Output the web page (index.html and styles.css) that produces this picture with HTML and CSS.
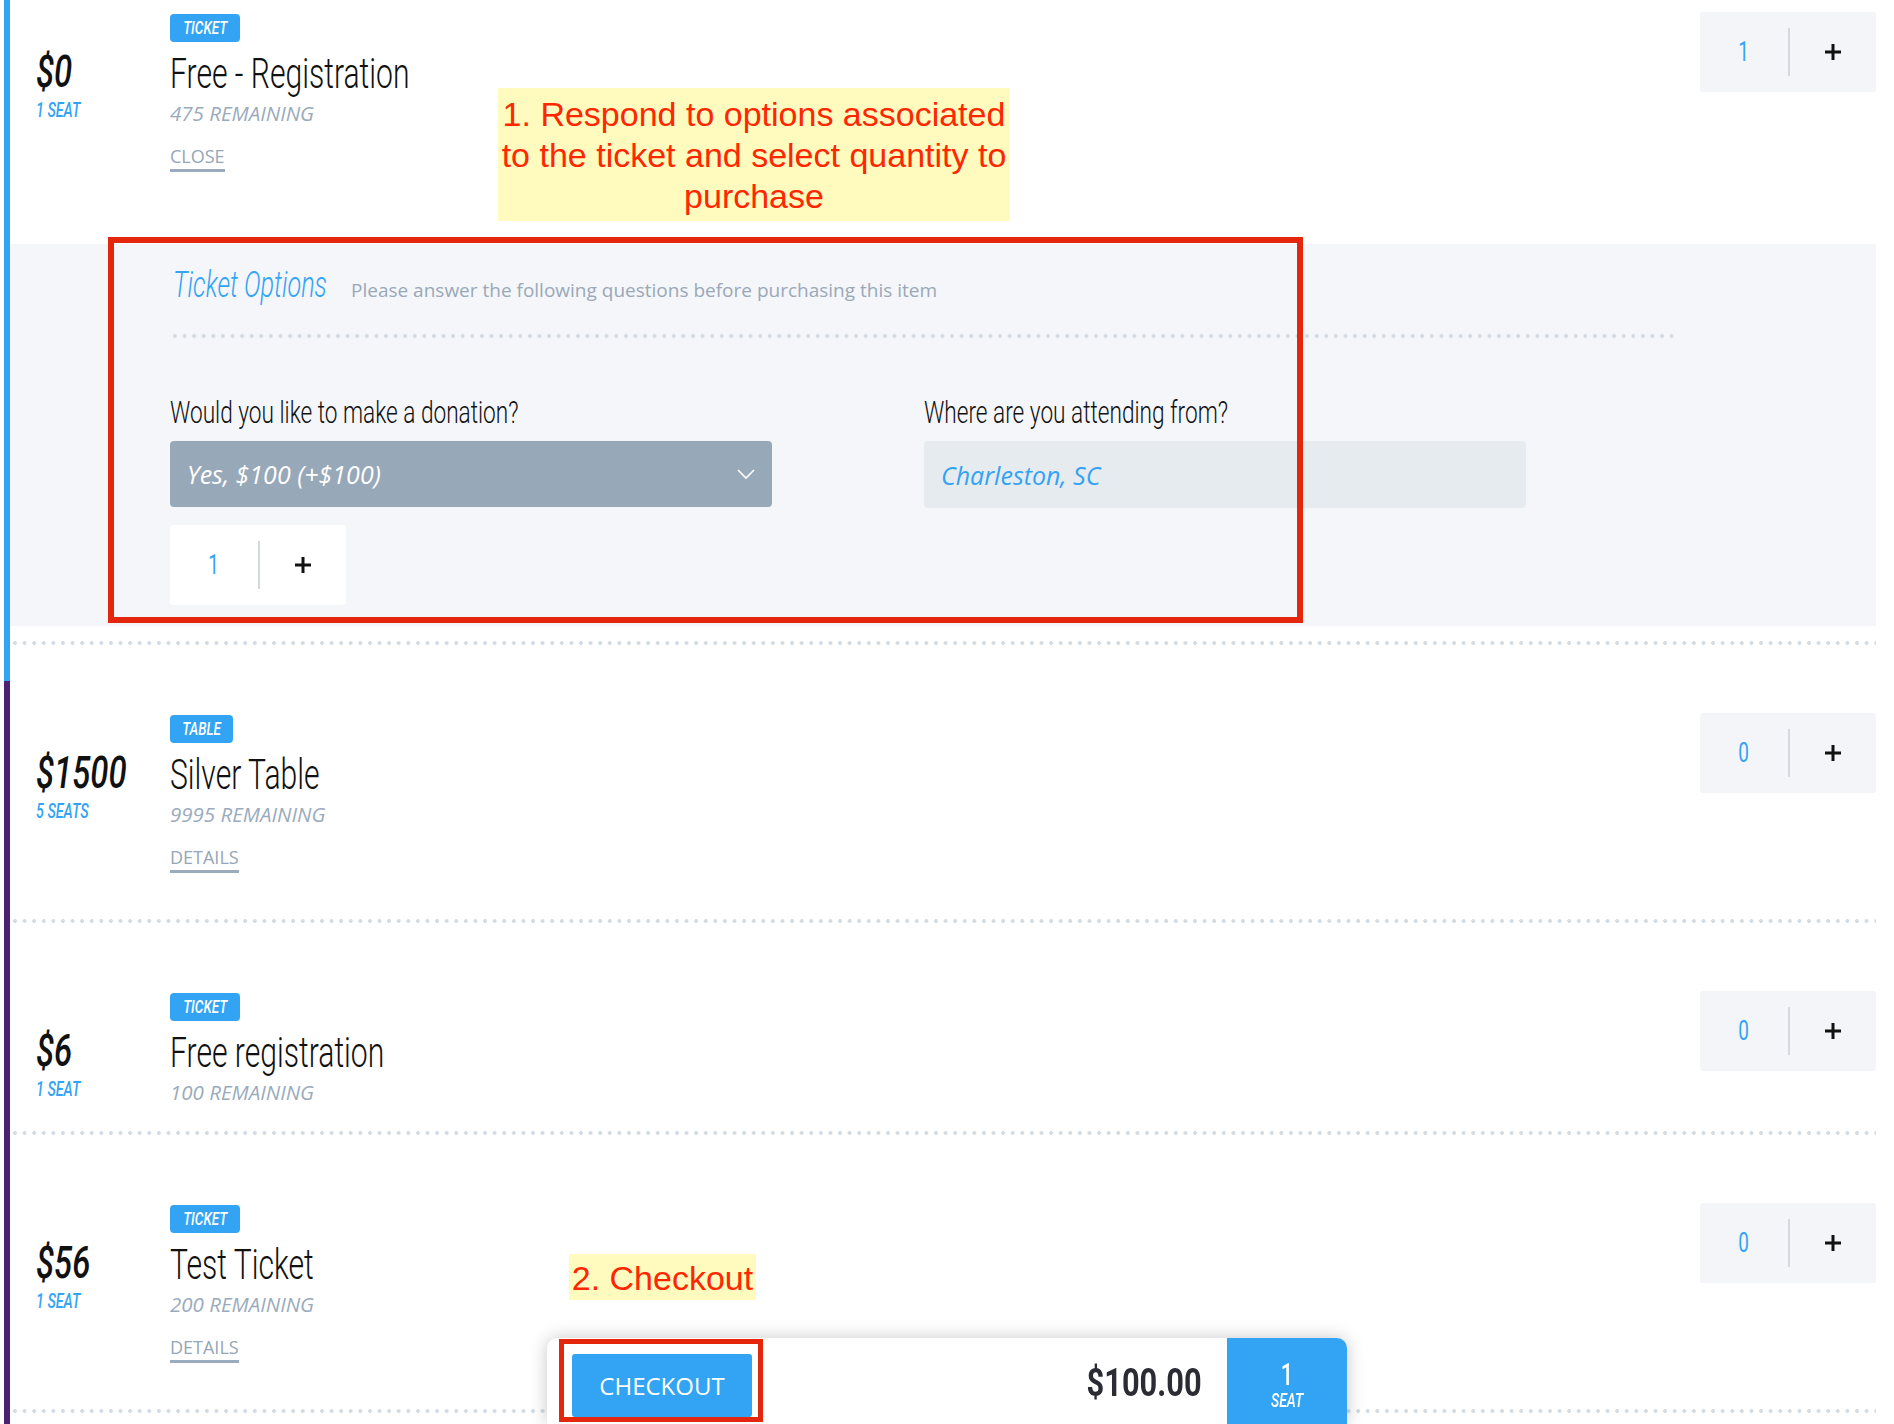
FILE: index.html
```html
<!DOCTYPE html>
<html lang="en">
<head>
  <meta charset="UTF-8">
  <meta name="viewport" content="width=device-width, initial-scale=1">
  <title>Tickets - Select Quantity</title>
  <link rel="stylesheet" href="styles.css">
</head>
<body>
  <div class="ticket-list">

    <!-- Free - Registration (options open) -->
    <div class="ticket ticket-open">
      <div class="ticket-row">
        <div class="price">
          <div class="price-amount"><span class="sq">$0</span></div>
          <div class="price-seats"><span class="sq">1 Seat</span></div>
        </div>
        <div class="info">
          <span class="badge"><span class="sq">Ticket</span></span>
          <div class="title"><span class="sq">Free - Registration</span></div>
          <div class="remaining">475 Remaining</div>
          <a class="details">Close</a>
        </div>
        <div class="qty">
          <span class="qty-value"><span class="sq">1</span></span>
          <span class="qty-plus"><svg width="18" height="18" viewBox="0 0 18 18"><path d="M9 1v16M1 9h16" stroke="#111" stroke-width="3"/></svg></span>
        </div>
      </div>

      <div class="options">
        <div class="options-head">
          <h3><span class="sq">Ticket Options</span></h3>
          <p>Please answer the following questions before purchasing this item</p>
        </div>
        <div class="options-line"></div>
        <div class="options-grid">
          <div class="field">
            <label><span class="sq">Would you like to make a donation?</span></label>
            <div class="select">
              <span>Yes, $100 (+$100)</span>
              <svg width="18" height="11" viewBox="0 0 18 11"><path d="M1 1l8 8 8-8" fill="none" stroke="#fff" stroke-width="1.6"/></svg>
            </div>
            <div class="qty qty-white">
              <span class="qty-value"><span class="sq">1</span></span>
              <span class="qty-plus"><svg width="18" height="18" viewBox="0 0 18 18"><path d="M9 1v16M1 9h16" stroke="#111" stroke-width="3"/></svg></span>
            </div>
          </div>
          <div class="field">
            <label><span class="sq">Where are you attending from?</span></label>
            <div class="input">Charleston, SC</div>
          </div>
        </div>
      </div>
      <div class="sep"></div>
    </div>

    <!-- Silver Table -->
    <div class="ticket">
      <div class="ticket-row">
        <div class="price">
          <div class="price-amount"><span class="sq">$1500</span></div>
          <div class="price-seats"><span class="sq">5 Seats</span></div>
        </div>
        <div class="info">
          <span class="badge"><span class="sq">Table</span></span>
          <div class="title"><span class="sq">Silver Table</span></div>
          <div class="remaining">9995 Remaining</div>
          <a class="details">Details</a>
        </div>
        <div class="qty">
          <span class="qty-value"><span class="sq">0</span></span>
          <span class="qty-plus"><svg width="18" height="18" viewBox="0 0 18 18"><path d="M9 1v16M1 9h16" stroke="#111" stroke-width="3"/></svg></span>
        </div>
      </div>
      <div class="sep"></div>
    </div>

    <!-- Free registration -->
    <div class="ticket">
      <div class="ticket-row">
        <div class="price">
          <div class="price-amount"><span class="sq">$6</span></div>
          <div class="price-seats"><span class="sq">1 Seat</span></div>
        </div>
        <div class="info">
          <span class="badge"><span class="sq">Ticket</span></span>
          <div class="title"><span class="sq">Free registration</span></div>
          <div class="remaining">100 Remaining</div>
        </div>
        <div class="qty">
          <span class="qty-value"><span class="sq">0</span></span>
          <span class="qty-plus"><svg width="18" height="18" viewBox="0 0 18 18"><path d="M9 1v16M1 9h16" stroke="#111" stroke-width="3"/></svg></span>
        </div>
      </div>
      <div class="sep"></div>
    </div>

    <!-- Test Ticket -->
    <div class="ticket">
      <div class="ticket-row">
        <div class="price">
          <div class="price-amount"><span class="sq">$56</span></div>
          <div class="price-seats"><span class="sq">1 Seat</span></div>
        </div>
        <div class="info">
          <span class="badge"><span class="sq">Ticket</span></span>
          <div class="title"><span class="sq">Test Ticket</span></div>
          <div class="remaining">200 Remaining</div>
          <a class="details">Details</a>
        </div>
        <div class="qty">
          <span class="qty-value"><span class="sq">0</span></span>
          <span class="qty-plus"><svg width="18" height="18" viewBox="0 0 18 18"><path d="M9 1v16M1 9h16" stroke="#111" stroke-width="3"/></svg></span>
        </div>
      </div>
      <div class="sep"></div>
    </div>

    <!-- help annotations -->
    <div class="mark mark-options"></div>
    <div class="note note-options">1. Respond to options associated<br>to the ticket and select quantity to<br>purchase</div>
    <div class="note note-checkout">2. Checkout</div>
  </div>

  <div class="checkout-bar">
    <div class="checkout-btn">CHECKOUT</div>
    <div class="total"><span class="sq">$100.00</span></div>
    <div class="seat-box">
      <span class="seat-count"><span class="sq">1</span></span>
      <span class="seat-label"><span class="sq">Seat</span></span>
    </div>
    <div class="mark mark-checkout"></div>
  </div>
</body>
</html>
```

FILE: styles.css
```css
html, body {
  margin: 0;
  overflow: hidden;
}
body {
  background: #fff;
  font-family: "Open Sans", sans-serif;
  color: #111;
}

/* tall, narrow display lettering */
.price-amount, .price-seats, .badge, .title, .options-head h3,
.field label, .total, .seat-count, .seat-label, .qty-value {
  font-family: Roboto, "DejaVu Sans Condensed", sans-serif;
}
.sq {
  display: inline-block;
  white-space: nowrap;
  transform-origin: 0 50%;
}
.title .sq { transform: scaleX(0.7); }
.options-head h3 .sq { transform: scaleX(0.7); }
.price-amount .sq { transform: scaleX(0.73); }
.price-seats .sq { transform: scaleX(0.68); }
.field label .sq { transform: scaleX(0.73); }
.badge .sq {
  margin: 0 -8px;
  transform: scaleX(0.73);
  transform-origin: 50% 50%;
}
.qty-value .sq, .seat-count .sq, .seat-label .sq {
  transform: scaleX(0.7);
  transform-origin: 50% 50%;
}
.total .sq {
  transform: scaleX(0.79);
  transform-origin: 100% 50%;
}

.ticket-list {
  position: relative;
  width: 1872px;
  margin-left: 4px;
}
.ticket {
  display: flex;
  flex-direction: column;
  padding: 34px 0 36px;
  border-left: 6px solid #4b2273;
}
.ticket-open {
  padding-top: 14px;
  border-left-color: #33a3f4;
}
.ticket-row {
  display: flex;
  align-items: flex-start;
  margin-bottom: 29px;
}
.ticket-open .ticket-row {
  margin-bottom: 0;
}

.price {
  flex: none;
  width: 134px;
  padding: 35px 0 0 26px;
}
.price-amount {
  font-size: 45px;
  line-height: 45px;
  font-style: italic;
  font-weight: 500;
}
.price-seats {
  margin-top: 6px;
  font-size: 21px;
  line-height: 21px;
  font-style: italic;
  font-weight: 500;
  color: #33a3f4;
  text-transform: uppercase;
}

.info {
  flex: 1;
  display: flex;
  flex-direction: column;
  align-items: flex-start;
}
.badge {
  display: inline-flex;
  align-items: center;
  height: 28px;
  padding: 0 13px;
  border-radius: 4px;
  background: #33a3f4;
  color: #fff;
  font-size: 18.5px;
  font-style: italic;
  font-weight: 500;
  text-transform: uppercase;
}
.title {
  margin-top: 9px;
  font-size: 43px;
  line-height: 44px;
  font-weight: 300;
}
.remaining {
  margin-top: 8px;
  font-size: 20.5px;
  line-height: 20px;
  font-style: italic;
  color: #9aabbd;
  text-transform: uppercase;
}
.details {
  margin: 24px 0 17px;
  padding-bottom: 4px;
  border-bottom: 3px solid #9aabbd;
  font-size: 18px;
  line-height: 18px;
  color: #95a6b7;
  text-transform: uppercase;
  cursor: pointer;
}

.qty {
  flex: none;
  display: flex;
  align-items: center;
  width: 176px;
  height: 80px;
  margin-top: -2px;
  border-radius: 3px;
  background: #f3f5f9;
}
.qty-value {
  width: 88px;
  border-right: 2px solid #d3d9de;
  text-align: center;
  font-size: 27px;
  line-height: 48px;
  color: #33a3f4;
}
.qty-plus {
  flex: 1;
  display: flex;
  justify-content: center;
}
.qty-white {
  margin-top: 18px;
  background: #fff;
}

.sep, .options-line {
  height: 4px;
  margin-left: 3px;
  background: radial-gradient(circle at 2px 2px, #d3dce3 1.7px, rgba(211, 220, 227, 0) 2.2px) 0 0 / 9.6px 4px repeat-x;
}

/* ticket options panel */
.options {
  margin: 55px 0 15px;
  padding: 23px 0 21px 160px;
  background: #f4f6fa;
}
.options-head {
  display: flex;
  align-items: baseline;
  gap: 22px;
}
.options-head h3 {
  flex: none;
  width: 159px;
  margin: 0;
  padding-left: 3px;
  box-sizing: border-box;
  font-size: 36px;
  line-height: 36px;
  font-weight: 300;
  font-style: italic;
  color: #33a3f4;
}
.options-head p {
  margin: 0;
  font-size: 19px;
  color: #9aa8b8;
}
.options-line {
  width: 1505px;
  margin-top: 31px;
  margin-left: 0;
  background-position: 3px 0;
}
.options-grid {
  display: grid;
  grid-template-columns: 602px 602px;
  column-gap: 152px;
  align-items: start;
  margin-top: 60px;
}
.field label {
  display: block;
  font-size: 31px;
  line-height: 30px;
  font-weight: 300;
}
.select, .input {
  box-sizing: border-box;
  display: flex;
  align-items: center;
  height: 66px;
  margin-top: 13px;
  padding: 0 17px;
  border-radius: 4px;
  font-size: 25px;
  font-style: italic;
}
.select {
  justify-content: space-between;
  background: #97a8b8;
  color: #fff;
}
.input {
  height: 67px;
  background: #e6ebef;
  color: #33a3f4;
}

/* annotations drawn over the page */
.mark {
  position: absolute;
  box-sizing: border-box;
  border: 6px solid #e3260c;
}
.mark-options {
  left: 104px;
  top: 237px;
  width: 1195px;
  height: 386px;
}
.note {
  position: absolute;
  z-index: 2;
  background: #fffbbf;
  color: #ff2600;
  font-family: "Liberation Sans", Arial, sans-serif;
  font-size: 34px;
  line-height: 41px;
  text-align: center;
  white-space: nowrap;
}
.note-options {
  left: 494px;
  top: 88px;
  width: 512px;
  padding: 6px 0 4px;
}
.note-checkout {
  left: 565px;
  top: 1254px;
  width: 187px;
  height: 46px;
  line-height: 48px;
}

/* checkout bar */
.checkout-bar {
  position: fixed;
  left: 0;
  right: 0;
  bottom: 0;
  display: flex;
  align-items: center;
  width: 800px;
  height: 86px;
  margin: 0 auto;
  border-radius: 10px 10px 0 0;
  background: #fff;
  box-shadow: 0 0 18px rgba(0, 0, 0, 0.22);
}
.checkout-btn {
  align-self: flex-start;
  display: flex;
  align-items: center;
  justify-content: center;
  width: 180px;
  height: 63px;
  margin: 16px 0 0 25px;
  border-radius: 3px;
  background: #33a3f4;
  color: #fff;
  font-size: 24px;
}
.total {
  margin: 4px 25px 0 auto;
  font-size: 39px;
  font-weight: 700;
  color: #2b2b33;
}
.seat-box {
  align-self: stretch;
  display: flex;
  flex-direction: column;
  align-items: center;
  justify-content: center;
  width: 120px;
  padding-top: 8px;
  box-sizing: border-box;
  border-radius: 0 10px 0 0;
  background: #33a3f4;
  color: #fff;
}
.seat-count {
  font-size: 31px;
  line-height: 30px;
  font-weight: 500;
}
.seat-label {
  font-size: 20px;
  line-height: 20px;
  font-style: italic;
  font-weight: 500;
  text-transform: uppercase;
}
.mark-checkout {
  left: 12px;
  top: 1px;
  width: 204px;
  height: 83px;
  border-width: 5px;
}
```
